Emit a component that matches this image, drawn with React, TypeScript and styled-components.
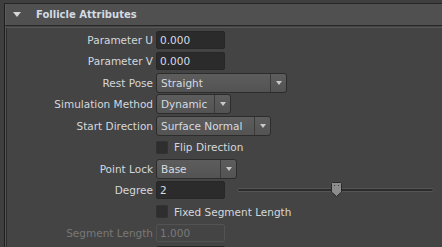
import React from "react";
import styled, { createGlobalStyle } from "styled-components";

const GlobalStyle = createGlobalStyle`
  html, body {
    margin: 0;
    padding: 0;
    background: #3f3f3f;
    overflow: hidden;
  }
  body {
    font-family: "DejaVu Sans", "Noto Sans", sans-serif;
    font-size: 10.5px;
  }
`;

const Frame = styled.div`
  margin: 3px 0 0 4px;
  width: 438px;
  height: 244px;
  border-left: 1px solid #1e1e1e;
  border-top: 1px solid #272727;
  background: #444444;
  overflow: hidden;
`;

const Header = styled.div`
  height: 21px;
  display: flex;
  align-items: center;
  background: #505050;
  border-left: 1px solid #5a5a5a;
  border-bottom: 1px solid #262626;
`;

const Caret = styled.div`
  width: 0;
  height: 0;
  margin-left: 7px;
  border-left: 4.5px solid transparent;
  border-right: 4.5px solid transparent;
  border-top: 5px solid #d6d6d6;
`;

const Title = styled.div`
  margin-left: 15px;
  font-weight: bold;
  font-size: 10px;
  color: #d3dbe3;
`;

const Body = styled.div`
  margin-top: 1px;
  padding-top: 1px;
  border-top: 1px solid #575757;
  border-left: 1px solid #565656;
  box-shadow: inset 1px 0 0 #2c2c2c;
  display: flex;
  flex-direction: column;
  height: 300px;
`;

const Row = styled.div`
  height: 21.5px;
  flex: 0 0 21.5px;
  display: flex;
  align-items: center;
`;

const Label = styled.div<{ $disabled?: boolean }>`
  width: 150px;
  flex: 0 0 150px;
  padding-right: 3px;
  box-sizing: border-box;
  text-align: right;
  white-space: nowrap;
  color: ${(p) => (p.$disabled ? "#787878" : "#d4d8dc")};
`;

const TextField = styled.div<{ $disabled?: boolean }>`
  width: 69px;
  height: 18px;
  box-sizing: border-box;
  padding-left: 3px;
  display: flex;
  align-items: center;
  border-radius: 2px;
  background: ${(p) => (p.$disabled ? "#444444" : "#2b2b2b")};
  border: 1px solid ${(p) => (p.$disabled ? "#525252" : "#272727")};
  color: ${(p) => (p.$disabled ? "#7a7a7a" : "#d6dde4")};
`;

const Dropdown = styled.div<{ $width: number }>`
  width: ${(p) => p.$width}px;
  height: 20px;
  box-sizing: border-box;
  display: flex;
  border: 1px solid #2c2c2c;
  border-radius: 3px;
  background: linear-gradient(#5d5d5d, #535353);
  color: #d6dbe0;
`;

const DropValue = styled.div`
  flex: 1;
  display: flex;
  align-items: center;
  padding-left: 4px;
  white-space: nowrap;
  overflow: hidden;
`;

const DropArrow = styled.div`
  width: 15px;
  border-left: 1px solid #3a3a3a;
  display: flex;
  align-items: center;
  justify-content: center;
  &::after {
    content: "";
    border-left: 3.5px solid transparent;
    border-right: 3.5px solid transparent;
    border-top: 4px solid #c9c9c9;
  }
`;

const Check = styled.div`
  width: 12px;
  height: 13px;
  border-radius: 1px;
  background: #2e2e2e;
  border: 1px solid #333;
  box-sizing: border-box;
`;

const CheckText = styled.div`
  margin-left: 6px;
  color: #d4d8dc;
  white-space: nowrap;
`;

const SliderTrack = styled.div`
  position: relative;
  margin-left: 12px;
  width: 197px;
  height: 4px;
  box-sizing: border-box;
  border-radius: 2px;
  background: #2c2c2c;
  border: 1px solid #555;
`;

const Thumb = styled.svg`
  position: absolute;
  left: 93px;
  top: -7px;
`;

const Knob = styled.div`
  margin-left: 32px;
  margin-top: 14px;
  width: 8px;
  height: 8px;
  border-radius: 3px;
  background: #262626;
`;

export default function App() {
  return (
    <>
      <GlobalStyle />
      <Frame>
        <Header>
          <Caret />
          <Title>Follicle Attributes</Title>
        </Header>
        <Body>
          <Row>
            <Label>Parameter U</Label>
            <TextField>0.000</TextField>
          </Row>
          <Row>
            <Label>Parameter V</Label>
            <TextField>0.000</TextField>
          </Row>
          <Row>
            <Label>Rest Pose</Label>
            <Dropdown $width={131}>
              <DropValue>Straight</DropValue>
              <DropArrow />
            </Dropdown>
          </Row>
          <Row>
            <Label>Simulation Method</Label>
            <Dropdown $width={75}>
              <DropValue>Dynamic</DropValue>
              <DropArrow />
            </Dropdown>
          </Row>
          <Row>
            <Label>Start Direction</Label>
            <Dropdown $width={115}>
              <DropValue>Surface Normal</DropValue>
              <DropArrow />
            </Dropdown>
          </Row>
          <Row>
            <Label />
            <Check />
            <CheckText>Flip Direction</CheckText>
          </Row>
          <Row>
            <Label>Point Lock</Label>
            <Dropdown $width={81}>
              <DropValue>Base</DropValue>
              <DropArrow />
            </Dropdown>
          </Row>
          <Row>
            <Label>Degree</Label>
            <TextField>2</TextField>
            <SliderTrack>
              <Thumb width="11" height="15" viewBox="0 0 11 15">
                <path d="M1.5 0.5 H9.5 L10.5 1.5 V10 L5.5 14.5 L0.5 10 V1.5 Z" fill="#8c8c8c" stroke="#2a2a2a" />
                <rect x="3" y="3" width="1" height="1" fill="#3a3a3a" />
                <rect x="7" y="3" width="1" height="1" fill="#3a3a3a" />
              </Thumb>
            </SliderTrack>
          </Row>
          <Row>
            <Label />
            <Check />
            <CheckText>Fixed Segment Length</CheckText>
          </Row>
          <Row>
            <Label $disabled>Segment Length</Label>
            <TextField $disabled>1.000</TextField>
          </Row>
          <Row>
            <Label />
            <TextField />
            <Knob />
          </Row>
        </Body>
      </Frame>
    </>
  );
}
